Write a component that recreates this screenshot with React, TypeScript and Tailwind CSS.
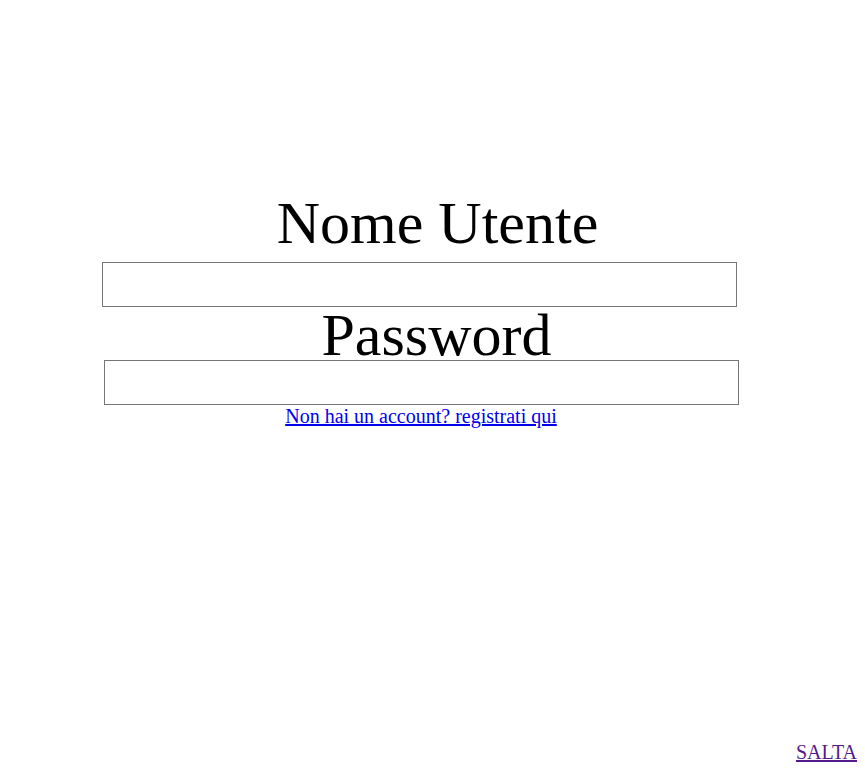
export default function App() {
  return (
    <div className="min-h-screen flex flex-col bg-white text-black font-['Liberation_Serif',serif]">
      {/* Login form */}
      <main className="flex flex-col items-center pt-[199px]">
        <label htmlFor="username" className="ml-[10px] text-[60px] leading-[48px]">
          Nome Utente
        </label>
        <input
          id="username"
          type="text"
          className="mt-[15px] mr-[26px] w-[635px] h-[45px] border border-[#767676] bg-white outline-none"
        />
        <label htmlFor="password" className="mt-[4px] ml-[8px] text-[60px] leading-[48px]">
          Password
        </label>
        <input
          id="password"
          type="password"
          className="mt-[1px] mr-[22px] w-[635px] h-[45px] border border-[#767676] bg-white outline-none"
        />
        <a href="#" className="mr-[23px] text-[20px] leading-[23px] text-[#0000EE] underline">
          Non hai un account? registrati qui
        </a>
      </main>

      <footer className="mt-auto flex justify-end pr-[8px] pb-[7px]">
        <a href="#" className="text-[20px] leading-[23px] text-[#551A8B] underline">
          SALTA
        </a>
      </footer>
    </div>
  );
}
